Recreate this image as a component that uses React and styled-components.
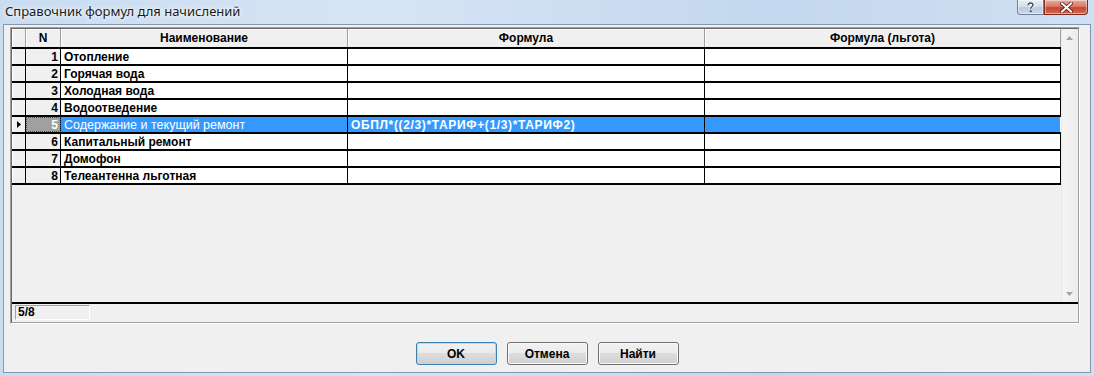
import React from 'react';
import styled, { createGlobalStyle } from 'styled-components';

const Global = createGlobalStyle`
  html, body { margin: 0; padding: 0; }
  body {
    width: 1094px; height: 376px; overflow: hidden;
    font-family: "Liberation Sans", Arial, sans-serif;
  }
`;

const Window = styled.div`
  width: 1094px; height: 376px; box-sizing: border-box;
  display: flex; flex-direction: column;
  padding: 0 3px 3px 3px;
  background: linear-gradient(to right, #c9dcf0 0%, #d6e5f5 35%, #c3d7ee 70%, #cfe0f2 100%);
`;

const TitleBar = styled.div`
  height: 24px; flex: none;
  display: flex; align-items: flex-start;
`;

const Title = styled.div`
  font-family: "Noto Sans", "Open Sans", sans-serif;
  font-size: 13px; line-height: 22px;
  padding-left: 2px;
  color: #1a1a1a;
  text-shadow: 0 0 6px rgba(255,255,255,0.95), 0 0 3px rgba(255,255,255,0.9);
`;

const CaptionGroup = styled.div`
  margin-left: auto; margin-right: 3px;
  display: flex;
`;

const CaptionButton = styled.div`
  width: ${p => p.$w}px; height: 15px; box-sizing: border-box;
  display: flex; align-items: center; justify-content: center;
  border: 1px solid ${p => (p.$close ? '#7a2a22' : '#6f819a')};
  border-top: none;
  border-radius: ${p => (p.$close ? '0 0 4px 0' : '0 0 0 4px')};
  background: ${p => (p.$close
    ? 'linear-gradient(#e9a99b 0%, #d77b6b 45%, #c8452f 55%, #d26b52 100%)'
    : 'linear-gradient(#e6edf6 0%, #d3dfec 45%, #bccbdd 55%, #cad7e6 100%)')};
  box-shadow: inset 0 0 0 1px rgba(255,255,255,0.45);
`;

const Client = styled.div`
  flex: 1; display: flex; flex-direction: column;
  border: 1px solid #8597b0;
  background: #f0f0f0;
`;

const Panel = styled.div`
  margin: 2px 10px 0 6px;
  border-style: solid; border-width: 1px;
  border-color: #a0a0a0 #ffffff #ffffff #a0a0a0;
`;

const PanelInner = styled.div`
  display: flex; flex-direction: column;
  border-style: solid; border-width: 1px;
  border-color: #696969 #a0a0a0 #a0a0a0 #696969;
`;

const GridArea = styled.div`
  height: 273px; display: flex;
`;

const Grid = styled.div`
  width: 1049px; display: flex; flex-direction: column;
  background: #f0f0f0;
`;

const HeaderRow = styled.div`
  display: flex; height: 18px;
  border-bottom: 2px solid #000;
`;

const HeaderCell = styled.div`
  width: ${p => p.$w}px; box-sizing: border-box; flex: none;
  display: flex; align-items: center; justify-content: center;
  background: #f0f0f0;
  border-right: 1px solid #a0a0a0;
  box-shadow: inset 1px 1px 0 #ffffff;
  font-weight: bold; font-size: 12px; color: #000;
  white-space: nowrap; overflow: hidden;
`;

const Row = styled.div`
  display: flex; height: 15px;
  border-bottom: 2px solid #000;
`;

const IndicatorCell = styled.div`
  width: 14px; box-sizing: border-box; flex: none;
  display: flex; align-items: center; justify-content: center;
  background: #f0f0f0;
  border-right: 1px solid #000;
  box-shadow: inset 1px 0 0 #ffffff;
`;

const NumCell = styled.div`
  width: 35px; box-sizing: border-box; flex: none;
  display: flex; align-items: center; justify-content: flex-end;
  padding-right: 2px;
  background: ${p => (p.$sel ? '#a0a0a0' : '#f0f0f0')};
  color: ${p => (p.$sel ? '#ffffff' : '#000')};
  border-right: 1px solid #000;
  outline: ${p => (p.$sel ? '1px dotted #6b4a2a' : 'none')};
  outline-offset: -1px;
  font-weight: bold; font-size: 12px;
`;

const DataCell = styled.div`
  width: ${p => p.$w}px; box-sizing: border-box; flex: none;
  display: flex; align-items: center;
  padding-left: 3px;
  background: ${p => (p.$sel ? '#3399ff' : '#ffffff')};
  color: ${p => (p.$sel ? '#ffffff' : '#000')};
  border-right: 1px solid ${p => (p.$sel && p.$last ? '#ffffff' : '#000')};
  font-weight: ${p => (p.$light ? 'normal' : 'bold')};
  font-size: ${p => (p.$light ? '12.5px' : '12px')};
  letter-spacing: ${p => (p.$wide ? '0.65px' : 'normal')};
  white-space: nowrap; overflow: hidden;
`;

const ScrollBar = styled.div`
  width: 17px; display: flex; flex-direction: column; justify-content: space-between;
  background: linear-gradient(to right, #e6e6e6 0px, #f4f4f4 2px, #ececec 100%);
`;

const ScrollButton = styled.div`
  height: 17px; display: flex; align-items: center; justify-content: center;
`;

const StatusBar = styled.div`
  border-top: 2px solid #000;
  height: 18px;
  display: flex; align-items: flex-start;
  padding-left: 3px;
`;

const StatusBox = styled.div`
  margin-top: 1px;
  width: 75px; height: 15px; box-sizing: border-box;
  border-style: solid; border-width: 1px;
  border-color: #a0a0a0 #ffffff #ffffff #a0a0a0;
  padding-left: 2px;
  font-weight: bold; font-size: 12px; line-height: 13px; color: #000;
`;

const ButtonBar = styled.div`
  display: flex; justify-content: center; gap: 10px;
  padding-top: 18px;
`;

const Button = styled.div`
  width: 81px; height: 23px; box-sizing: border-box;
  display: flex; align-items: center; justify-content: center;
  border: 1px solid ${p => (p.$default ? '#3c7fb1' : '#707070')};
  border-radius: 3px;
  background: linear-gradient(#f2f2f2 0%, #ebebeb 45%, #dddddd 50%, #cfcfcf 100%);
  box-shadow: inset 0 0 0 1px ${p => (p.$default ? '#a9dcf6' : '#fbfbfb')};
  font-weight: bold; font-size: 12px; color: #000;
`;

const cols = [
  { key: 'name', w: 287, title: 'Наименование' },
  { key: 'formula', w: 357, title: 'Формула' },
  { key: 'lgota', w: 356, title: 'Формула (льгота)' },
];

const rows = [
  { n: 1, name: 'Отопление' },
  { n: 2, name: 'Горячая вода' },
  { n: 3, name: 'Холодная вода' },
  { n: 4, name: 'Водоотведение' },
  { n: 5, name: 'Содержание и текущий ремонт', formula: 'ОБПЛ*((2/3)*ТАРИФ+(1/3)*ТАРИФ2)', sel: true },
  { n: 6, name: 'Капитальный ремонт' },
  { n: 7, name: 'Домофон' },
  { n: 8, name: 'Телеантенна льготная' },
];

const Arrow = ({ up }) => (
  <svg width="7" height="4" viewBox="0 0 7 4">
    <polygon points={up ? '3.5,0 7,4 0,4' : '0,0 7,0 3.5,4'} fill="#a3a3a3" />
  </svg>
);

export default function App() {
  return (
    <>
      <Global />
      <Window>
        <TitleBar>
          <Title>Справочник формул для начислений</Title>
          <CaptionGroup>
            <CaptionButton $w={27}>
              <svg width="9" height="11" viewBox="0 0 9 11">
                <path d="M2 3.2 C2 1.5 3.2 1 4.5 1 C6 1 7 1.8 7 3 C7 4.6 4.7 4.8 4.7 6.8" fill="none" stroke="#ffffff" strokeWidth="3" />
                <path d="M2 3.2 C2 1.5 3.2 1 4.5 1 C6 1 7 1.8 7 3 C7 4.6 4.7 4.8 4.7 6.8" fill="none" stroke="#3b4a5e" strokeWidth="1.4" />
                <rect x="3.8" y="8.3" width="1.8" height="1.8" fill="#3b4a5e" />
              </svg>
            </CaptionButton>
            <CaptionButton $w={44} $close>
              <svg width="13" height="11" viewBox="0 0 13 11">
                <path d="M2 1.5 L11 9.5 M11 1.5 L2 9.5" stroke="#5a1a12" strokeWidth="3.6" strokeLinecap="square" />
                <path d="M2 1.5 L11 9.5 M11 1.5 L2 9.5" stroke="#ffffff" strokeWidth="2" strokeLinecap="square" />
              </svg>
            </CaptionButton>
          </CaptionGroup>
        </TitleBar>
        <Client>
          <Panel>
            <PanelInner>
              <GridArea>
                <Grid>
                  <HeaderRow>
                    <HeaderCell $w={14} />
                    <HeaderCell $w={35}>N</HeaderCell>
                    {cols.map(c => (
                      <HeaderCell key={c.key} $w={c.w}>{c.title}</HeaderCell>
                    ))}
                  </HeaderRow>
                  {rows.map(r => (
                    <Row key={r.n}>
                      <IndicatorCell>
                        {r.sel && (
                          <svg width="4" height="7" viewBox="0 0 4 7">
                            <polygon points="0,0 4,3.5 0,7" fill="#000" />
                          </svg>
                        )}
                      </IndicatorCell>
                      <NumCell $sel={r.sel}>{r.n}</NumCell>
                      <DataCell $w={287} $sel={r.sel} $light={r.sel}>{r.name}</DataCell>
                      <DataCell $w={357} $sel={r.sel} $wide>{r.formula || ''}</DataCell>
                      <DataCell $w={356} $sel={r.sel} $last />
                    </Row>
                  ))}
                </Grid>
                <ScrollBar>
                  <ScrollButton><Arrow up /></ScrollButton>
                  <ScrollButton><Arrow /></ScrollButton>
                </ScrollBar>
              </GridArea>
              <StatusBar>
                <StatusBox>5/8</StatusBox>
              </StatusBar>
            </PanelInner>
          </Panel>
          <ButtonBar>
            <Button $default>OK</Button>
            <Button>Отмена</Button>
            <Button>Найти</Button>
          </ButtonBar>
        </Client>
      </Window>
    </>
  );
}
